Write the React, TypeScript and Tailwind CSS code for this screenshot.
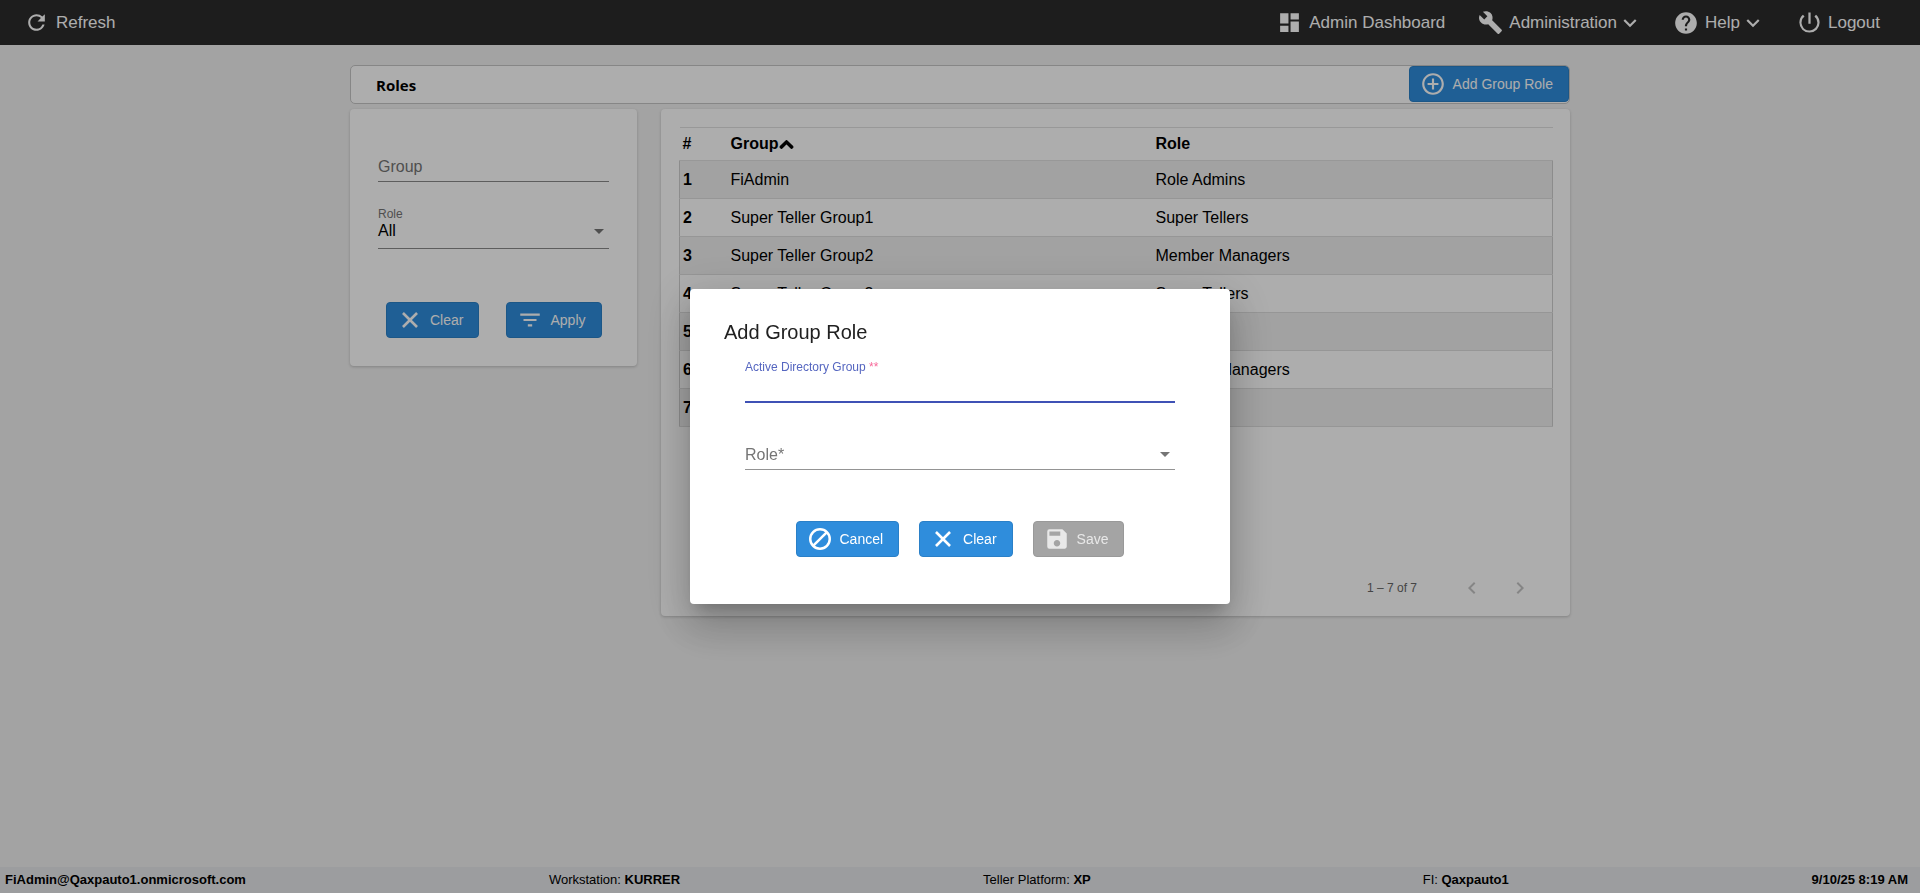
import type { ReactNode } from "react";
import {
  MdAddCircleOutline,
  MdArrowDropDown,
  MdBuild,
  MdChevronLeft,
  MdChevronRight,
  MdDashboard,
  MdFilterList,
  MdHelp,
  MdKeyboardArrowDown,
  MdPowerSettingsNew,
  MdRefresh,
  MdSave,
} from "react-icons/md";
import { FaChevronUp } from "react-icons/fa";

const rows = [
  ["1", "FiAdmin", "Role Admins"],
  ["2", "Super Teller Group1", "Super Tellers"],
  ["3", "Super Teller Group2", "Member Managers"],
  ["4", "Super Teller Group3", "Super Tellers"],
  ["5", "Super Teller Group4", "Tellers"],
  ["6", "Super Teller Group5", "Member Managers"],
  ["7", "Super Teller Group6", "Tellers"],
];

function CloseIcon() {
  return (
    <svg width="26" height="26" viewBox="0 0 24 24" fill="none" stroke="currentColor" strokeWidth="2.4">
      <path d="M5.5 5.5l13 13M18.5 5.5l-13 13" />
    </svg>
  );
}

function BlockIcon() {
  return (
    <svg width="26" height="26" viewBox="0 0 24 24" fill="none" stroke="currentColor" strokeWidth="2.3">
      <circle cx="12" cy="12" r="9" />
      <path d="M18.4 5.6L5.6 18.4" />
    </svg>
  );
}

function ActionButton({ icon, label, disabled }: { icon: ReactNode; label: string; disabled?: boolean }) {
  return (
    <button
      className={
        disabled
          ? "flex h-[36px] items-center gap-[7px] rounded-[4px] border border-[#999999] bg-[#a4a4a4] pl-[10px] pr-[15px] text-sm text-[#e8e8e8]"
          : "flex h-[36px] items-center gap-[7px] rounded-[4px] border border-[#2a80c8] bg-[#2f8ddc] pl-[10px] pr-[15px] text-sm text-white"
      }
    >
      {icon}
      {label}
    </button>
  );
}

export default function App() {
  return (
    <div className="relative flex h-screen flex-col overflow-hidden bg-[#f0f0f0] font-['Liberation_Sans',Arial,sans-serif] text-black">
      {/* Top bar */}
      <header className="flex h-[45px] shrink-0 items-center justify-between bg-[#2c2c2c] pl-[24px] pr-[40px] text-[17px] text-white">
        <div className="flex items-center gap-[7px]">
          <MdRefresh size={25} />
          Refresh
        </div>
        <div className="flex items-center">
          <div className="flex items-center gap-[7px]">
            <MdDashboard size={25} />
            Admin Dashboard
          </div>
          <div className="ml-[33px] flex items-center gap-[6px]">
            <MdBuild size={25} />
            <span className="flex items-center">
              Administration
              <MdKeyboardArrowDown size={26} />
            </span>
          </div>
          <div className="ml-[30px] flex items-center gap-[6px]">
            <MdHelp size={26} />
            <span className="flex items-center">
              Help
              <MdKeyboardArrowDown size={26} />
            </span>
          </div>
          <div className="ml-[30px] flex items-center gap-[5px]">
            <MdPowerSettingsNew size={27} />
            Logout
          </div>
        </div>
      </header>

      <main className="mx-auto flex min-h-0 w-[1220px] flex-1 flex-col pt-[20px]">
        {/* Title bar */}
        <div className="flex h-[39px] items-start justify-between rounded-[5px] border border-[#c6c6c6] bg-white pl-[25px]">
          <h1 className="mt-[2px] self-center font-['Open_Sans',sans-serif] text-[15px] font-bold">Roles</h1>
          <ActionButton icon={<MdAddCircleOutline size={26} />} label="Add Group Role" />
        </div>

        <div className="mt-[5px] flex items-start gap-[24px]">
          {/* Filters */}
          <aside className="h-[257px] w-[287px] rounded-[4px] bg-white px-[28px] pt-[41px] shadow-[0_1px_3px_rgba(0,0,0,0.2)]">
            <div className="flex h-[32px] items-end border-b border-[#8a8a8a] pb-[5px] leading-[19px] text-[#757575]">Group</div>
            <div className="mt-[25px] border-b border-[#8a8a8a] pb-[8px]">
              <div className="text-xs leading-[14px] text-[#757575]">Role</div>
              <div className="flex items-center justify-between leading-[19px]">
                All
                <MdArrowDropDown size={24} className="-mr-[2px] -my-[3px] text-[#757575]" />
              </div>
            </div>
            <div className="ml-[8px] mt-[53px] flex gap-[27px]">
              <ActionButton icon={<CloseIcon />} label="Clear" />
              <ActionButton icon={<MdFilterList size={26} />} label="Apply" />
            </div>
          </aside>

          {/* Table */}
          <section className="flex h-[507px] w-[909px] flex-col rounded-[4px] bg-white px-[18px] pt-[18px] shadow-[0_1px_3px_rgba(0,0,0,0.2)]">
            <table className="w-[874px] table-fixed border-collapse text-base">
              <colgroup>
                <col className="w-[48px]" />
                <col className="w-[425px]" />
                <col />
              </colgroup>
              <thead>
                <tr className="h-[33px] border-y border-[#e0e0e0] text-left font-bold">
                  <th className="pl-[3px]">#</th>
                  <th className="pl-[3px]">
                    <span className="flex items-center">
                      Group
                      <FaChevronUp size={15} strokeWidth={40} />
                    </span>
                  </th>
                  <th className="pl-[3px]">Role</th>
                </tr>
              </thead>
              <tbody className="border border-[#cfcfcf]">
                {rows.map((row, i) => (
                  <tr key={row[0]} className={i % 2 === 0 ? "h-[38px] border-b border-[#dddddd] bg-[#efefef]" : "h-[38px] border-b border-[#dddddd] bg-white"}>
                    <td className="pl-[3px] font-bold">{row[0]}</td>
                    <td className="pl-[3px]">{row[1]}</td>
                    <td className="pl-[3px]">{row[2]}</td>
                  </tr>
                ))}
              </tbody>
            </table>
            <div className="mb-[4px] mt-auto flex h-[48px] items-center justify-end pr-[20px] text-xs text-[#666666]">
              <span>1 – 7 of 7</span>
              <div className="ml-[43px] flex gap-[24px] text-[#c4c4c4]">
                <MdChevronLeft size={24} />
                <MdChevronRight size={24} />
              </div>
            </div>
          </section>
        </div>
      </main>

      {/* Status bar */}
      <footer className="flex h-[26px] shrink-0 items-center justify-between bg-[#e6e7ea] pl-[5px] pr-[12px] text-[13px]">
        <b>FiAdmin@Qaxpauto1.onmicrosoft.com</b>
        <span>
          Workstation: <b>KURRER</b>
        </span>
        <span className="mr-[29px]">
          Teller Platform: <b>XP</b>
        </span>
        <span>
          FI: <b>Qaxpauto1</b>
        </span>
        <b>9/10/25 8:19 AM</b>
      </footer>

      {/* Dialog */}
      <div className="fixed inset-0 flex items-center justify-center bg-[rgba(0,0,0,0.32)]">
        <div className="h-[315px] w-[540px] rounded-[4px] bg-white pt-[32px] shadow-[0_11px_15px_-7px_rgba(0,0,0,0.2),0_24px_38px_3px_rgba(0,0,0,0.14),0_9px_46px_8px_rgba(0,0,0,0.12)]">
          <h2 className="pl-[34px] text-xl leading-[23px] text-[#212121]">Add Group Role</h2>
          <div className="mt-[16px] px-[55px]">
            <div className="h-[43px] border-b-2 border-[#3f51b5]">
              <span className="block text-xs leading-[14px] text-[#5566c0]">
                Active Directory Group <span className="text-[#f76a9a]">**</span>
              </span>
            </div>
            <div className="mt-[39px] flex h-[28px] items-center justify-between border-b border-[#949494] pb-[2px] text-[#757575]">
              Role*
              <MdArrowDropDown size={24} className="-mr-[2px] mb-[2px]" />
            </div>
          </div>
          <div className="mt-[51px] flex justify-center gap-[20px]">
            <ActionButton icon={<BlockIcon />} label="Cancel" />
            <ActionButton icon={<CloseIcon />} label="Clear" />
            <ActionButton icon={<MdSave size={26} />} label="Save" disabled />
          </div>
        </div>
      </div>
    </div>
  );
}
